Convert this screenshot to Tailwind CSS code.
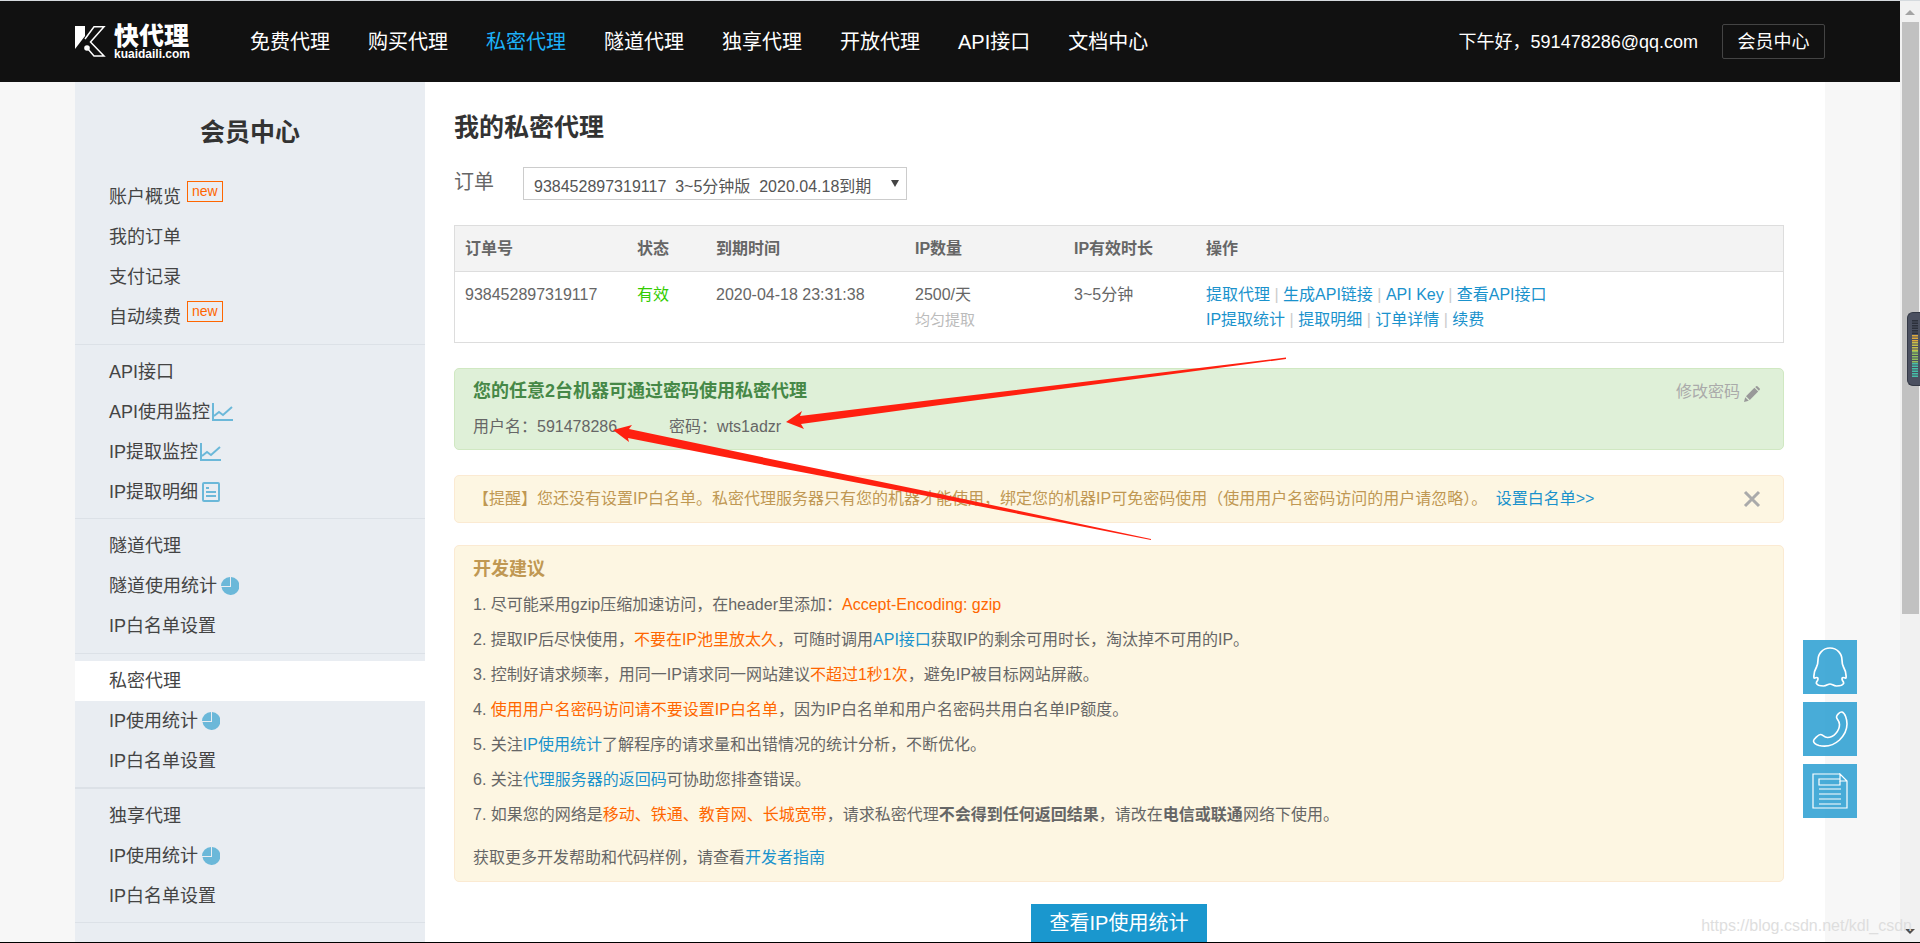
<!DOCTYPE html>
<html lang="zh-CN">
<head>
<meta charset="utf-8">
<title>快代理 - 我的私密代理</title>
<script src="https://cdn.jsdelivr.net/npm/@tailwindcss/browser@4"></script>
</head>
<body class="relative h-screen overflow-hidden border-t border-b border-t-[#d5dade] border-b-black bg-[#f7f7f7] font-['Liberation_Sans','Noto_Sans_CJK_SC',sans-serif] text-base text-[#666]">

<!-- shared icons -->
<svg class="hidden">
  <symbol id="chart" viewBox="0 0 21 18"><path d="M1 0v17h20" fill="none" stroke="#6bb8d9" stroke-width="2"/><path d="M2 13l5-4 4 3 9-8" fill="none" stroke="#6bb8d9" stroke-width="2"/></symbol>
  <symbol id="pie" viewBox="0 0 18 18"><path d="M10 0A9 9 0 1 1 0.500 10h9.500z" fill="#6bb8d9"/><path d="M9 0v9H0A9 9 0 0 1 9 0z" fill="#6bb8d9"/></symbol>
  <symbol id="doc" viewBox="0 0 18 20"><rect x="1" y="1" width="16" height="18" rx="1" fill="none" stroke="#6bb8d9" stroke-width="2"/><path d="M4 6h3M4 10h10M4 14h10" stroke="#6bb8d9" stroke-width="2"/></symbol>
</svg>

<div class="flex h-full">
  <div class="flex h-full min-w-0 flex-1 flex-col">
    <header class="flex h-[81px] shrink-0 items-center bg-[#111] px-[75px] text-white">
      <a href="#" class="flex w-[115px] shrink-0 items-center gap-2">
        <svg class="h-[31px] w-[31px] shrink-0" viewBox="0 0 31 31"><path d="M0 0h10v10L0 23z" fill="#fff"/><path d="M10 13L19 0.800h10L15.500 16l13.500 14H19l-6-7" fill="none" stroke="#fff" stroke-width="1.500"/><circle cx="12" cy="22" r="2.800" fill="#fff"/></svg>
        <span class="flex flex-col">
          <span class="text-[25px] leading-6 font-black">快代理</span>
          <span class="text-xs leading-3 font-bold">kuaidaili.com</span>
        </span>
      </a>
      <nav class="ml-[60px] flex gap-[38px] text-xl whitespace-nowrap">
        <a href="#">免费代理</a>
        <a href="#">购买代理</a>
        <a href="#" class="text-[#1db0f8]">私密代理</a>
        <a href="#">隧道代理</a>
        <a href="#">独享代理</a>
        <a href="#">开放代理</a>
        <a href="#">API接口</a>
        <a href="#">文档中心</a>
      </nav>
      <div class="ml-auto flex items-center gap-6 text-lg whitespace-nowrap">
        <span>下午好，591478286@qq.com</span>
        <a href="#" class="flex h-[35px] w-[103px] items-center justify-center rounded-xs border border-[#444]">会员中心</a>
      </div>
    </header>

    <div class="mx-[75px] flex min-h-0 flex-1 bg-white">
      <aside class="w-[350px] shrink-0 overflow-hidden bg-[#e9edf2] text-lg text-[#444]">
        <h2 class="pt-8 pb-5 text-center text-[25px] leading-9 font-bold text-[#333]">会员中心</h2>
        <ul class="border-b border-[#dce1e7] py-[7px]">
          <li><a href="#" class="flex h-10 items-center gap-1.5 pl-[34px]">账户概览<span class="mb-3 h-[21px] border border-[#ff6600] px-1 text-sm leading-[18px] text-[#ff6600]">new</span></a></li>
          <li><a href="#" class="flex h-10 items-center pl-[34px]">我的订单</a></li>
          <li><a href="#" class="flex h-10 items-center pl-[34px]">支付记录</a></li>
          <li><a href="#" class="flex h-10 items-center gap-1.5 pl-[34px]">自动续费<span class="mb-3 h-[21px] border border-[#ff6600] px-1 text-sm leading-[18px] text-[#ff6600]">new</span></a></li>
        </ul>
        <ul class="border-b border-[#dce1e7] pt-[7px] pb-1.5">
          <li><a href="#" class="flex h-10 items-center pl-[34px]">API接口</a></li>
          <li><a href="#" class="flex h-10 items-center gap-0.5 pl-[34px]">API使用监控<svg class="h-[18px] w-[21px]"><use href="#chart"/></svg></a></li>
          <li><a href="#" class="flex h-10 items-center gap-0.5 pl-[34px]">IP提取监控<svg class="h-[18px] w-[21px]"><use href="#chart"/></svg></a></li>
          <li><a href="#" class="flex h-10 items-center gap-1 pl-[34px]">IP提取明细<svg class="h-5 w-[18px]"><use href="#doc"/></svg></a></li>
        </ul>
        <ul class="border-b border-[#dce1e7] py-[7px]">
          <li><a href="#" class="flex h-10 items-center pl-[34px]">隧道代理</a></li>
          <li><a href="#" class="flex h-10 items-center gap-1 pl-[34px]">隧道使用统计<svg class="h-[18px] w-[18px]"><use href="#pie"/></svg></a></li>
          <li><a href="#" class="flex h-10 items-center pl-[34px]">IP白名单设置</a></li>
        </ul>
        <ul class="border-b-2 border-[#dce1e7] pt-[7px] pb-1.5">
          <li><a href="#" class="flex h-10 items-center bg-white pl-[34px]">私密代理</a></li>
          <li><a href="#" class="flex h-10 items-center gap-1 pl-[34px]">IP使用统计<svg class="h-[18px] w-[18px]"><use href="#pie"/></svg></a></li>
          <li><a href="#" class="flex h-10 items-center pl-[34px]">IP白名单设置</a></li>
        </ul>
        <ul class="border-b border-[#dce1e7] pt-[7px] pb-1.5">
          <li><a href="#" class="flex h-10 items-center pl-[34px]">独享代理</a></li>
          <li><a href="#" class="flex h-10 items-center gap-1 pl-[34px]">IP使用统计<svg class="h-[18px] w-[18px]"><use href="#pie"/></svg></a></li>
          <li><a href="#" class="flex h-10 items-center pl-[34px]">IP白名单设置</a></li>
        </ul>
      </aside>

      <main class="min-w-0 flex-1 overflow-hidden pt-[30px] pr-[41px] pl-[29px]">
        <h1 class="text-[25px] leading-[30px] font-bold text-[#333]">我的私密代理</h1>

        <div class="mt-[25px] flex h-[33px] items-center">
          <label for="order" class="mb-1 w-[69px] text-xl">订单</label>
          <div class="relative h-full w-[384px]">
            <select id="order" class="h-full w-full appearance-none border border-[#ccc] bg-white pt-1.5 pl-2.5 text-[#555]">
              <option>938452897319117&nbsp; 3~5分钟版&nbsp; 2020.04.18到期</option>
            </select>
            <svg class="pointer-events-none absolute top-[13px] right-2 h-[7px] w-2" viewBox="0 0 8 7"><path d="M0 0h8L4 7z" fill="#444"/></svg>
          </div>
        </div>

        <table class="mt-[25px] w-full table-fixed border-separate border-spacing-0 border border-[#ddd] text-left">
          <colgroup><col class="w-[172px]"><col class="w-[79px]"><col class="w-[199px]"><col class="w-[159px]"><col class="w-[132px]"><col></colgroup>
          <thead>
            <tr class="h-[46px] bg-[#f3f3f3]">
              <th class="border-b border-[#ddd] px-2.5 font-bold">订单号</th>
              <th class="border-b border-[#ddd] px-2.5 font-bold">状态</th>
              <th class="border-b border-[#ddd] px-2.5 font-bold">到期时间</th>
              <th class="border-b border-[#ddd] px-2.5 font-bold">IP数量</th>
              <th class="border-b border-[#ddd] px-2.5 font-bold">IP有效时长</th>
              <th class="border-b border-[#ddd] px-2.5 font-bold">操作</th>
            </tr>
          </thead>
          <tbody>
            <tr class="align-top leading-[25px]">
              <td class="p-2.5">938452897319117</td>
              <td class="p-2.5 text-[#33cc00]">有效</td>
              <td class="p-2.5">2020-04-18 23:31:38</td>
              <td class="p-2.5">2500/天<br><span class="text-[15px] text-[#bbb]">均匀提取</span></td>
              <td class="p-2.5">3~5分钟</td>
              <td class="p-2.5 text-[#ccc]">
                <a href="#" class="text-[#1a92cc]">提取代理</a> | <a href="#" class="text-[#1a92cc]">生成API链接</a> | <a href="#" class="text-[#1a92cc]">API Key</a> | <a href="#" class="text-[#1a92cc]">查看API接口</a><br>
                <a href="#" class="text-[#1a92cc]">IP提取统计</a> | <a href="#" class="text-[#1a92cc]">提取明细</a> | <a href="#" class="text-[#1a92cc]">订单详情</a> | <a href="#" class="text-[#1a92cc]">续费</a>
              </td>
            </tr>
          </tbody>
        </table>

        <section class="mt-[25px] rounded-[5px] border border-[#d0e8c2] bg-[#dff0d8] px-[18px] py-2.5 leading-[25px]">
          <div class="flex justify-between">
            <h3 class="text-lg leading-[25px] font-bold text-[#468847]">您的任意2台机器可通过密码使用私密代理</h3>
            <a href="#" class="mr-[5px] flex items-center gap-1 text-[#aaa]">修改密码
              <svg class="mt-1 h-4 w-4" viewBox="0 0 16 16" fill="#999"><path d="M0 16l1.200-4.800 3.600 3.600zM2 10.200L10.400 1.800l3.800 3.800L5.800 14zM11.200 1l1-.8q.8-.4 1.500.2l2 2q.5.700 0 1.400l-.8 1z"/></svg>
            </a>
          </div>
          <p class="mt-2.5 flex gap-[52px]"><span>用户名：591478286</span><span>密码：wts1adzr</span></p>
        </section>

        <section class="mt-[25px] flex items-center justify-between rounded-[5px] border border-[#fbead2] bg-[#fdf6e2] px-[18px] py-[11px] leading-6 text-[#c09853]">
          <p>【提醒】您还没有设置IP白名单。私密代理服务器只有您的机器才能使用，绑定您的机器IP可免密码使用（使用用户名密码访问的用户请忽略）。 <a href="#" class="ml-1 text-[#1a92cc]">设置白名单&gt;&gt;</a></p>
          <button type="button" aria-label="关闭" class="mr-1">
            <svg class="h-[18px] w-[18px]" viewBox="0 0 18 18"><path d="M2 2l14 14M16 2L2 16" stroke="#aaa" stroke-width="3"/></svg>
          </button>
        </section>

        <section class="mt-[22px] rounded-[5px] border border-[#fbead2] bg-[#fdf6e2] px-[18px] py-[11px]">
          <h3 class="text-lg leading-[25px] font-bold text-[#c09853]">开发建议</h3>
          <ol class="mt-[5px] leading-[35px]">
            <li>1. 尽可能采用gzip压缩加速访问，在header里添加：<span class="text-[#ff6600]">Accept-Encoding: gzip</span></li>
            <li>2. 提取IP后尽快使用，<span class="text-[#ff6600]">不要在IP池里放太久</span>，可随时调用<a href="#" class="text-[#1a92cc]">API接口</a>获取IP的剩余可用时长，淘汰掉不可用的IP。</li>
            <li>3. 控制好请求频率，用同一IP请求同一网站建议<span class="text-[#ff6600]">不超过1秒1次</span>，避免IP被目标网站屏蔽。</li>
            <li>4. <span class="text-[#ff6600]">使用用户名密码访问请不要设置IP白名单</span>，因为IP白名单和用户名密码共用白名单IP额度。</li>
            <li>5. 关注<a href="#" class="text-[#1a92cc]">IP使用统计</a>了解程序的请求量和出错情况的统计分析，不断优化。</li>
            <li>6. 关注<a href="#" class="text-[#1a92cc]">代理服务器的返回码</a>可协助您排查错误。</li>
            <li>7. 如果您的网络是<span class="text-[#ff6600]">移动、铁通、教育网、长城宽带</span>，请求私密代理<b>不会得到任何返回结果</b>，请改在<b>电信或联通</b>网络下使用。</li>
          </ol>
          <p class="mt-[13px] leading-[25px]">获取更多开发帮助和代码样例，请查看<a href="#" class="text-[#1a92cc]">开发者指南</a></p>
        </section>

        <div class="mt-[22px] flex justify-center">
          <button type="button" class="h-[50px] w-44 bg-[#1a97ce] pb-3 text-xl text-white">查看IP使用统计</button>
        </div>
      </main>
    </div>
  </div>

  <!-- scrollbar -->
  <div class="flex h-full w-5 shrink-0 flex-col items-center bg-[#f1f1f1]">
    <svg class="mt-[9px] mb-[7px] h-[5px] w-2.5 shrink-0" viewBox="0 0 10 5"><path d="M5 0l5 5H0z" fill="#a3a3a3"/></svg>
    <div class="h-[592px] w-[17px] bg-[#c1c1c1]"></div>
    <svg class="mt-auto mb-2 h-[5px] w-2.5 shrink-0" viewBox="0 0 10 5"><path d="M0 0h10L5 5z" fill="#505050"/></svg>
  </div>
</div>

<!-- floating contact buttons -->
<div class="absolute top-[639px] right-[63px] flex flex-col gap-2">
  <a href="#" aria-label="QQ" class="flex h-[54px] w-[54px] items-center justify-center bg-[#1a97ce]/80">
    <svg class="h-10 w-[34px]" viewBox="0 0 34 40" fill="none" stroke="#fff" stroke-width="1.700" stroke-linejoin="round"><path d="M17 1C10 1 5 6.500 5 13c0 3-.5 5-1.500 7C1.500 23.500.5 27 1 31c1 .3 2-.5 3-.5 1.500 0 1 2 .5 3-1 1.500-1.500 2-1 3 1 2.500 4 2.500 7 2.500 3 0 4.500-2 6.500-2s3.500 2 6.500 2 6 0 7-2.500c.5-1 0-1.500-1-3-.5-1-1-3 .5-3 1 0 2 .8 3 .5.500-4-.5-7.500-2.500-11-1-2-1.500-4-1.500-7 0-6.500-5-12-12-12z"/></svg>
  </a>
  <a href="#" aria-label="电话" class="flex h-[54px] w-[54px] items-center justify-center bg-[#1a97ce]/80">
    <svg class="h-9 w-9" viewBox="0 0 36 36" fill="none" stroke="#fff" stroke-width="1.600" stroke-linejoin="round"><path d="M30 1c3 1 5 7 5 12 0 6-3 11.500-7.500 16C22 34 14 36 7 34.500 4 33.500 1.500 31.500 1.500 30c0-1.500 5-6.500 7-6.500 2.500 0 3 3 7 3 6 0 12-6.500 12-13 0-4-3-5-3-7.500C24.500 4 28 .5 30 1z"/></svg>
  </a>
  <a href="#" aria-label="反馈" class="flex h-[54px] w-[54px] items-center justify-center bg-[#1a97ce]/80">
    <svg class="h-9 w-9" viewBox="0 0 36 36" fill="none" stroke="#fff" stroke-width="1.200"><path d="M28 1H1v34h34V8l-7-7v7h7"/><path d="M28 8v4H7V6h21M7 16h22M7 21h22M7 26h22M7 31h22"/></svg>
  </a>
</div>

<!-- level meter docked at the window edge -->
<div class="absolute top-[311px] right-0 flex h-[74px] w-[13px] items-center justify-end rounded-l-md border border-r-0 border-[#333845] bg-[#4b5060] pr-0.5">
  <svg class="h-[58px] w-1.5" viewBox="0 0 6 58" stroke-width="6">
    <path d="M3 0v15" stroke="#2c303b" stroke-dasharray="1.500 1"/>
    <path d="M3 15v7" stroke="#e0a93a" stroke-dasharray="1.500 1"/>
    <path d="M3 22v9" stroke="#c6c04a" stroke-dasharray="1.500 1"/>
    <path d="M3 31v12" stroke="#8fbf60" stroke-dasharray="1.500 1"/>
    <path d="M3 43v15" stroke="#45c0a8" stroke-dasharray="1.500 1"/>
  </svg>
</div>

<!-- annotation arrows -->
<svg class="pointer-events-none absolute top-0 left-0 h-[942px] w-full" fill="#ff2010">
  <path d="M786 421L802 410L800 415L940 398L1286 356.500L1286 358L940 404L801 423L804 428z"/>
  <path d="M613 429L632 424L629 428L780 460L940 493L1151 538L1151 539L940 497.500L780 467L628 437L629 441z"/>
</svg>

<p class="pointer-events-none absolute right-2 bottom-1 text-base text-[#dedede]">https://blog.csdn.net/kdl_csdn</p>
</body>
</html>
